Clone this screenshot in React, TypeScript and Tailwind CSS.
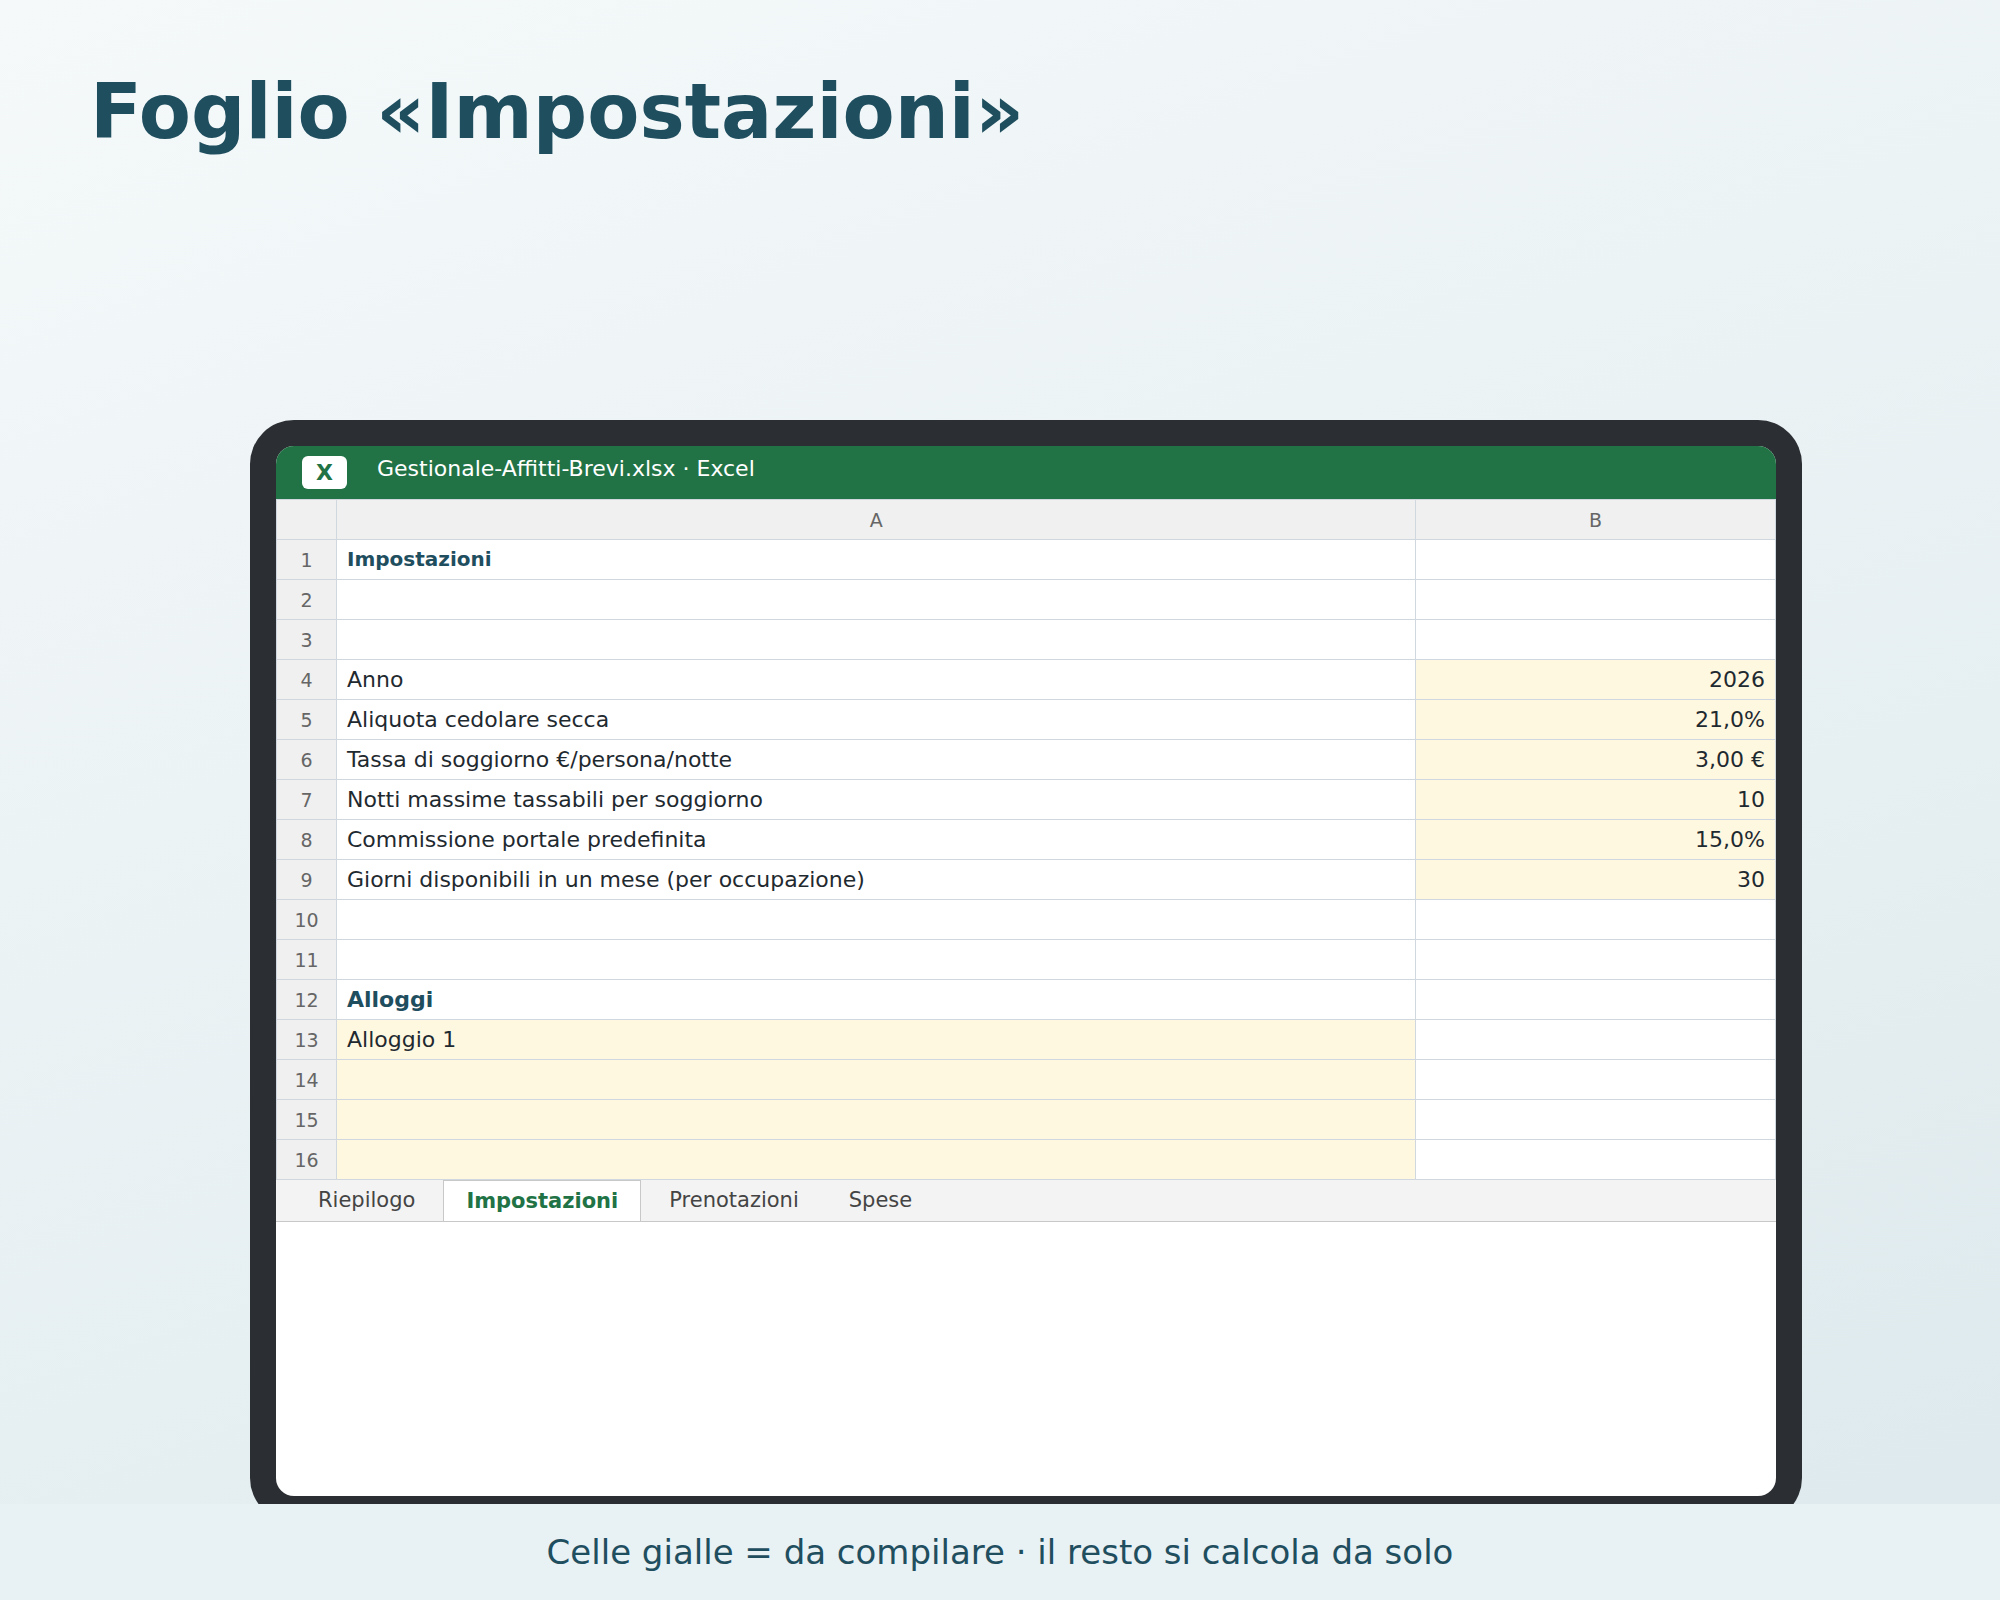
import { useState } from 'react';

type Row = { a?: string; b?: string; fillA?: boolean; fillB?: boolean; aClass?: string };

const rows: Row[] = [
  { a: 'Impostazioni', aClass: 'text-xl leading-[23px] font-bold text-[#1f4e5f]' },
  {},
  {},
  { a: 'Anno', b: '2026', fillB: true },
  { a: 'Aliquota cedolare secca', b: '21,0%', fillB: true },
  { a: 'Tassa di soggiorno €/persona/notte', b: '3,00 €', fillB: true },
  { a: 'Notti massime tassabili per soggiorno', b: '10', fillB: true },
  { a: 'Commissione portale predefinita', b: '15,0%', fillB: true },
  { a: 'Giorni disponibili in un mese (per occupazione)', b: '30', fillB: true },
  {},
  {},
  { a: 'Alloggi', aClass: 'font-bold text-[#1f4e5f]' },
  { a: 'Alloggio 1', fillA: true },
  { fillA: true },
  { fillA: true },
  { fillA: true },
];

const sheets = ['Riepilogo', 'Impostazioni', 'Prenotazioni', 'Spese'];

function SheetTable() {
  return (
    <table className="w-full table-fixed border-collapse text-[22px] leading-[26px] text-[#1f2a30]">
      <colgroup>
        <col className="w-[60px]" />
        <col />
        <col className="w-[24%]" />
      </colgroup>
      <thead>
        <tr className="h-10 bg-[#f0f0f0] text-[19px] text-[#666]">
          <td className="border border-[#d0d7de]"></td>
          <th scope="col" className="border border-[#d0d7de] font-normal">A</th>
          <th scope="col" className="border border-[#d0d7de] font-normal">B</th>
        </tr>
      </thead>
      <tbody>
        {rows.map((row, i) => (
          <tr key={i} className="h-10">
            <th scope="row" className="border border-[#d0d7de] bg-[#f0f0f0] text-[19px] font-normal text-[#666]">
              {i + 1}
            </th>
            <td className={`border border-[#d0d7de] px-[10px] ${row.fillA ? 'bg-[#fff8e1]' : 'bg-white'}`}>
              {row.a && <span className={`block ${row.aClass ?? ''}`}>{row.a}</span>}
            </td>
            <td
              className={`border border-[#d0d7de] px-[10px] text-right ${row.fillB ? 'bg-[#fff8e1]' : 'bg-white'}`}
            >
              {row.b}
            </td>
          </tr>
        ))}
      </tbody>
    </table>
  );
}

export default function App() {
  const [active, setActive] = useState('Impostazioni');

  return (
    <div className="flex h-screen flex-col overflow-hidden bg-[linear-gradient(160deg,#f5f9fa_0%,#dde9ed_100%)] font-['DejaVu_Sans',sans-serif]">
      <h1 className="px-[90px] pt-[68px] text-[76px] leading-[88px] font-bold text-[#1f4e5f]">
        Foglio «Impostazioni»
      </h1>

      {/* Tablet, il bordo inferiore finisce sotto la didascalia */}
      <main className="mt-auto h-[1084px] shrink-0 overflow-hidden pr-[198px] pl-[250px]">
        <div className="h-[1102px] rounded-[44px] bg-[#2b2f33] p-[26px]">
          <div className="h-full overflow-hidden rounded-[18px] bg-white">
            <header className="flex items-start gap-[30px] bg-[#217346] px-[26px] py-[10px] text-[22px] leading-[26px] text-white">
              <span className="rounded-md bg-white px-[14px] pt-1 pb-[3px] font-bold text-[#217346]">X</span>
              <span>Gestionale-Affitti-Brevi.xlsx · Excel</span>
            </header>

            <SheetTable />

            <nav className="flex items-start gap-[6px] border-b border-[#c8c8c8] bg-[#f3f3f3] px-5 text-[21px] leading-6">
              {sheets.map((name) => (
                <button
                  key={name}
                  onClick={() => setActive(name)}
                  className={
                    name === active
                      ? 'border border-b-0 border-[#c8c8c8] bg-white px-[22px] py-2 font-bold text-[#217346]'
                      : 'px-[22px] py-2 text-[#444]'
                  }
                >
                  {name}
                </button>
              ))}
            </nav>
          </div>
        </div>
      </main>

      <footer className="flex h-24 shrink-0 items-center justify-center bg-[#e8f1f4] text-[34px] leading-10 text-[#1f4e5f]">
        Celle gialle = da compilare · il resto si calcola da solo
      </footer>
    </div>
  );
}
